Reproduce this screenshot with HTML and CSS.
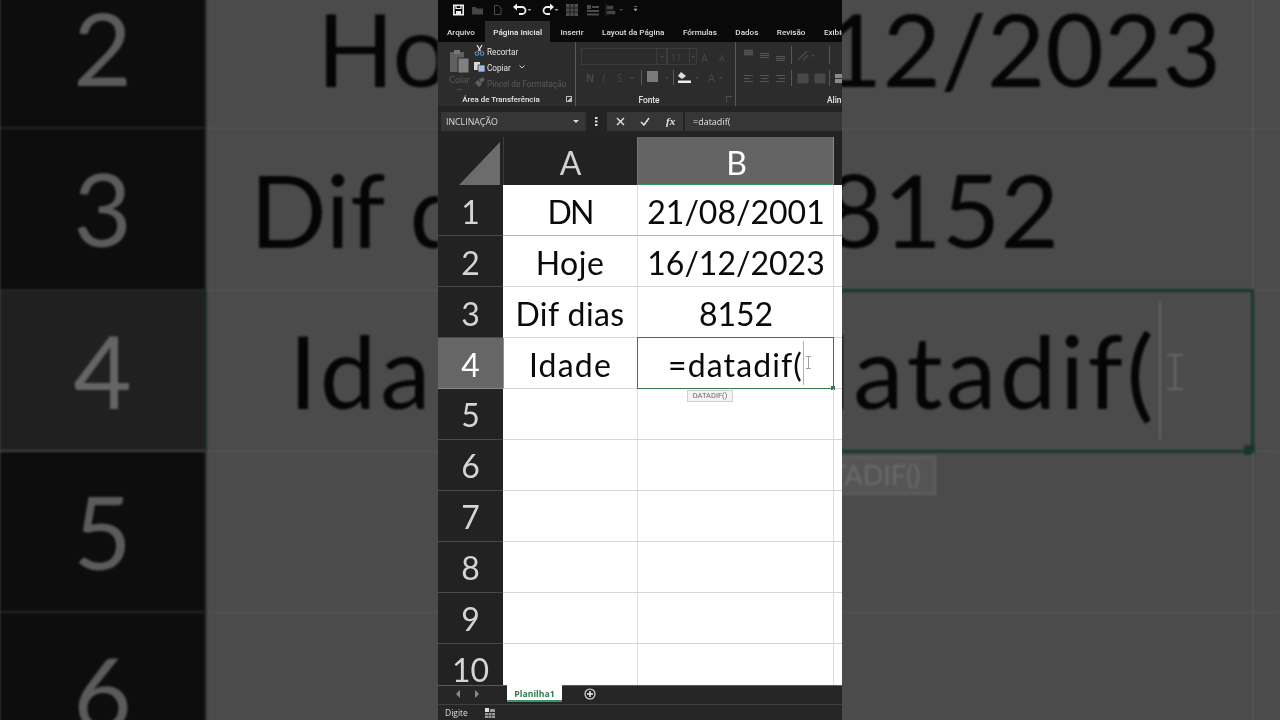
FILE: index.html
```html
<!DOCTYPE html>
<html lang="pt-BR">
<head>
<meta charset="utf-8">
<title>Excel - DATADIF</title>
<link rel="stylesheet" href="styles.css">
</head>
<body>
<div class="stage">
  <section class="side side-left">
    <div class="zoom-rows">
      <div class="zrow"><div class="zhead">2</div><div class="zcell zcell-l pad-hoje">Hoje</div></div>
      <div class="zrow"><div class="zhead">3</div><div class="zcell zcell-l pad-dif">Dif dias</div></div>
      <div class="zrow zrow-active"><div class="zhead">4</div><div class="zcell zcell-l pad-idade">Idade</div></div>
      <div class="zrow"><div class="zhead">5</div><div class="zcell zcell-l"></div></div>
      <div class="zrow"><div class="zhead">6</div><div class="zcell zcell-l"></div></div>
    </div>
  </section>

  <main class="app">
    <div class="qat">
      <svg class="qat-svg" width="200" height="21" viewBox="0 0 200 21">
        <g fill="none" stroke="#f0f0f0" stroke-width="1.6"><rect x="15.8" y="5.3" width="9.4" height="9.4"/><path d="M18 5.5v3h5v-3" stroke-width="1.2"/></g><rect x="18" y="11" width="5" height="3.5" fill="#f0f0f0"/>
        <path d="M34 7h4l1 1.5h6v6H34z" fill="#454545"/>
        <path d="M56.5 5.5h4l2.5 2.5v6.500h-6.500z" fill="none" stroke="#4c4c4c"/>
        <g fill="none" stroke="#f2f2f2" stroke-width="1.8"><path d="M78 7h6a3.500 3.500 0 0 1 0 7h-3"/></g><path d="M75 7l4-3.500v7z" fill="#f2f2f2"/>
        <path d="M89.500 9l2 2 2-2z" fill="#aaa"/>
        <g fill="none" stroke="#f2f2f2" stroke-width="1.800"><path d="M113 7h-4a3.500 3.500 0 0 0 0 7h3"/></g><path d="M116 7l-4-3.500v7z" fill="#f2f2f2"/>
        <path d="M116.500 9l2 2 2-2z" fill="#aaa"/>
        <g fill="#4c4c4c"><rect x="128" y="4" width="12" height="12"/></g><path d="M128 8h12M128 12h12M132 4v12M136 4v12" stroke="#1c1c1c"/>
        <path d="M149 5h4v4h-4zM154 6h7v2h-7zM149 10h12v2h-12zM149 13.500h12v2h-12z" fill="#4c4c4c"/>
        <path d="M168 4v12M169 6h6v3h-6zM169 11h8v3h-8z" fill="#444" stroke="#444" stroke-width=".6"/>
        <path d="M181 9l2 2 2-2z" fill="#444"/>
        <path d="M196 6.500h3M196 9l1.500 2 1.500-2z" fill="#aaa" stroke="#aaa" stroke-width=".6"/>
      </svg>
    </div>

    <nav class="tabs">
      <span class="tab">Arquivo</span>
      <span class="tab tab-active">Página Inicial</span>
      <span class="tab">Inserir</span>
      <span class="tab">Layout da Página</span>
      <span class="tab">Fórmulas</span>
      <span class="tab">Dados</span>
      <span class="tab">Revisão</span>
      <span class="tab">Exibir</span>
    </nav>

    <div class="ribbon">
      <div class="group group-clip">
        <div class="clip-body">
          <div class="paste">
            <svg width="22" height="26" viewBox="0 0 22 26"><path d="M1 4h14v20H1z" fill="#5f5f5f"/><path d="M5 2h6v4H5z" fill="#777"/><path d="M9 10h11v15H9z" fill="#808080" stroke="#2c2c2c"/></svg>
            <span class="paste-label">Colar</span>
            <span class="paste-caret"></span>
          </div>
          <div class="clip-actions">
            <div class="clip-row">
              <svg width="11" height="11" viewBox="0 0 11 11"><path d="M3 0l3.500 6M8 0L4.500 6" stroke="#e6e6e6" stroke-width="1.200" fill="none"/><circle cx="3" cy="8.500" r="1.800" fill="none" stroke="#5d93c9" stroke-width="1.100"/><circle cx="8" cy="8.500" r="1.800" fill="none" stroke="#5d93c9" stroke-width="1.100"/></svg>
              <span>Recortar</span>
            </div>
            <div class="clip-row">
              <svg width="11" height="11" viewBox="0 0 11 11"><path d="M0 1h6v8H0z" fill="#d8d8d8"/><path d="M4 4h7v7H4z" fill="#9fc0e4" stroke="#2c2c2c" stroke-width=".7"/></svg>
              <span>Copiar</span>
              <svg class="small-caret" width="6" height="4" viewBox="0 0 6 4"><path d="M.5.500l2.500 2.500L5.500.500" fill="none" stroke="#ccc"/></svg>
            </div>
            <div class="clip-row clip-row-off">
              <svg width="11" height="11" viewBox="0 0 11 11"><path d="M5 2l4-2 2 3-4 3zM1 6l3-3 4 4-3 3z" fill="#5e5e5e"/></svg>
              <span>Pincel de Formatação</span>
            </div>
          </div>
        </div>
        <div class="group-label">Área de Transferência<i class="launcher launcher-on"></i></div>
      </div>

      <div class="group group-font">
        <svg class="controls" width="158" height="50" viewBox="0 0 158 50">
          <g fill="none" stroke="#3c3c3c"><rect x="5.500" y="6.500" width="75" height="16"/><rect x="80.500" y="6.500" width="10" height="16"/><rect x="91.500" y="6.500" width="29" height="16"/><path d="M113.500 6.500v16"/></g>
          <g fill="#484848"><path d="M84 14l2 2 2-2zM115 14l2 2 2-2z"/><text x="95" y="19" font-size="9" class="ctl-text">11</text><text x="125" y="20" font-size="11" class="ctl-text">A</text><text x="143" y="20" font-size="9" class="ctl-text">A</text>
          <text x="10" y="40" font-size="10" font-weight="700" class="ctl-text">N</text><text x="26" y="40" font-size="10" font-style="italic" class="ctl-text">I</text><text x="41" y="40" font-size="10" class="ctl-text">S</text><path d="M54 35l2 2 2-2zM89 35l2 2 2-2zM119 35l2 2 2-2zM143 35l2 2 2-2z"/><text x="132" y="40" font-size="11" class="ctl-text">A</text></g>
          <path d="M65.500 28v15M97.500 28v15" stroke="#5a5a5a"/>
          <rect x="71" y="29" width="11" height="11" fill="#7a7a7a"/>
          <path d="M105 30l5 4-4 3-4-3z" fill="#e0e0e0"/><rect x="102" y="38.500" width="13" height="2.500" fill="#ececec"/>
        </svg>
        <div class="group-label">Fonte<i class="launcher"></i></div>
      </div>

      <div class="group group-align">
        <svg class="controls" width="106" height="50" viewBox="0 0 106 50">
          <g stroke="#565656" fill="none">
            <path d="M8 8.500h9M8 10.500h9M8 12.500h9" stroke-width="1.500"/>
            <path d="M24 11.500h9M24 13.500h9M24 15.500h9"/>
            <path d="M40 14.500h9M40 16.500h9M40 18.500h9"/>
            <path d="M8 33.500h9M8 36.500h6M8 39.500h9M24 33.500h9M25.500 36.500h6M24 39.500h9M40 33.500h9M43 36.500h6M40 39.500h9"/>
            <path d="M55.500 4v18M55.500 28v16M93.500 4v18M93.500 28v16" stroke="#585858"/>
            <path d="M62 18l9-9M67 18l5-5" stroke-width="1.500" stroke="#484848"/>
            <path d="M62 32h10v9H62zM79 32h10v9H79z" fill="#484848" stroke="#484848"/>
          </g>
          <path d="M75 13l2 2 2-2z" fill="#484848"/>
          <path d="M99 32h7v9h-7z" fill="#8a8a8a"/><path d="M99 36.500h7" stroke="#2c2c2c"/>
        </svg>
        <div class="group-label group-label-clip">Alinhamento</div>
      </div>
    </div>

    <div class="formula">
      <div class="namebox"><span>INCLINAÇÃO</span><i class="down-tri"></i></div>
      <svg class="dots" width="3" height="11" viewBox="0 0 3 11"><path d="M0 1h2.500v2H0zM0 4.500h2.500v2H0zM0 8h2.500v2H0z" fill="#dcdcdc"/></svg>
      <div class="fx-box">
        <svg width="9" height="9" viewBox="0 0 9 9"><path d="M1 1l7 7M8 1L1 8" stroke="#e4e4e4" stroke-width="1.400"/></svg>
        <svg width="10" height="9" viewBox="0 0 10 9"><path d="M1 5l3 3 5-7" fill="none" stroke="#e4e4e4" stroke-width="1.500"/></svg>
        <span class="fx">fx</span>
      </div>
      <div class="input">=datadif(</div>
    </div>

    <div class="sheet">
      <div class="corner"><svg width="42" height="44" viewBox="0 0 42 44"><path d="M0 44L41 1v43z" fill="#6c6c6c"/></svg></div>
      <div class="colhead">A</div>
      <div class="colhead colhead-on">B</div>
      <div class="colrest"></div>

      <div class="rowhead">1</div><div class="cell cell-first ls-dn">DN</div><div class="cell cell-b cell-first">21/08/2001</div><div class="cell-rest cell-first"></div>
      <div class="rowhead">2</div><div class="cell ls-hoje">Hoje</div><div class="cell cell-b">16/12/2023</div><div class="cell-rest"></div>
      <div class="rowhead">3</div><div class="cell ls-dif">Dif dias</div><div class="cell cell-b">8152</div><div class="cell-rest"></div>
      <div class="rowhead rowhead-on">4</div><div class="cell cell-a4 ls-idade">Idade</div>
      <div class="cell cell-sel"><span class="ls-formula">=datadif(</span><i class="caret"></i><svg class="ibeam" width="5" height="13" viewBox="0 0 5 13"><path d="M0 .5h5M0 12.500h5M2.500 .5v12" stroke="#a0a0a0" fill="none"/></svg><i class="handle"></i><span class="tip">DATADIF()</span></div><div class="cell-rest"></div>
      <div class="rowhead rowhead-low">5</div><div class="cell"></div><div class="cell cell-b"></div><div class="cell-rest"></div>
      <div class="rowhead rowhead-low">6</div><div class="cell"></div><div class="cell cell-b"></div><div class="cell-rest"></div>
      <div class="rowhead rowhead-low">7</div><div class="cell"></div><div class="cell cell-b"></div><div class="cell-rest"></div>
      <div class="rowhead rowhead-low">8</div><div class="cell"></div><div class="cell cell-b"></div><div class="cell-rest"></div>
      <div class="rowhead rowhead-low">9</div><div class="cell"></div><div class="cell cell-b"></div><div class="cell-rest"></div>
      <div class="rowhead rowhead-low">10</div><div class="cell"></div><div class="cell cell-b"></div><div class="cell-rest"></div>
    </div>

    <div class="sheetbar">
      <svg class="nav-arrows" width="24" height="8" viewBox="0 0 24 8"><path d="M4 0v8L0 4zM19 0v8l4-4z" fill="#8a8a8a"/></svg>
      <div class="sheet-tab">Planilha1</div>
      <svg class="add" width="12" height="12" viewBox="0 0 12 12"><circle cx="6" cy="6" r="5" fill="none" stroke="#eee" stroke-width="1.100"/><path d="M3 6h6M6 3v6" stroke="#eee" stroke-width="1.500"/></svg>
    </div>

    <footer class="status">
      <span>Digite</span>
      <svg width="10" height="10" viewBox="0 0 10 10"><path d="M0 0h4v4H0z" fill="#e0e0e0"/><path d="M0 5h10v5H0zM5 1h5v3H5z" fill="#9a9a9a"/><path d="M0 7.500h10M3.300 5v5M6.600 5v5" stroke="#262626" stroke-width=".6"/></svg>
    </footer>
  </main>

  <section class="side side-right">
    <div class="zoom-rows">
      <div class="zrow"><div class="zcell zcell-r pad-r1">16/12/2023</div><div class="zgap"></div></div>
      <div class="zrow"><div class="zcell zcell-r pad-r2">8152</div><div class="zgap"></div></div>
      <div class="zrow"><div class="zcell zcell-r zcell-sel pad-r3">=datadif(<i class="zcaret"></i><svg class="zibeam" width="16" height="36" viewBox="0 0 16 36"><path d="M0 1h16M0 35h16M8 1v34" stroke="#686868" stroke-width="2" fill="none"/></svg><i class="zhandle"></i></div><div class="zgap"></div></div>
      <div class="zrow"><div class="zcell zcell-r"><span class="ztip">DATADIF()</span></div><div class="zgap"></div></div>
      <div class="zrow"><div class="zcell zcell-r"></div><div class="zgap"></div></div>
    </div>
  </section>
</div>
</body>
</html>
```

FILE: styles.css
```css
* { box-sizing: border-box; }
html, body { margin: 0; height: 100%; overflow: hidden; background: #000; }
i { display: block; font-style: normal; }
svg { display: block; flex: none; }

.stage { display: flex; width: 1280px; height: 720px; font-family: "Lato", "Liberation Sans", sans-serif; }

/* blurred, dimmed side panels */
.side { width: 438px; height: 720px; overflow: hidden; flex: none; background: #4b4b4b; }
.zoom-rows { margin-top: -32px; filter: blur(.8px); }
.zrow { display: flex; height: 161.300px; }
.zhead { flex: none; width: 207px; background: #0d0d0d; border-bottom: 2px solid #262626; border-right: 2px solid #333; color: #5b5b5b; font-size: 101px; line-height: 159px; text-align: center; }
.zrow-active .zhead { background: #202020; border-bottom-color: #414141; border-right-color: #17301f; color: #656565; }
.zcell { position: relative; height: 161.300px; display: flex; align-items: center; white-space: nowrap; color: #050505; font-size: 101px; line-height: 159px; border-bottom: 1px solid #5a5a5a; overflow: visible; }
.zcell-l { flex: 1; min-width: 0; overflow: hidden; }
.zcell-r { flex: none; width: 412px; justify-content: flex-end; border-right: 2px solid #555; }
.zgap { flex: 1; height: 161.300px; border-bottom: 1px solid #5a5a5a; }
.pad-hoje { padding-left: 110px; }
.pad-dif { padding-left: 43px; }
.pad-idade { padding-left: 82px; letter-spacing: 4px; }
.pad-r1 { padding-right: 31px; }
.pad-r2 { padding-right: 193px; }
.pad-r3 { padding-right: 94px; letter-spacing: 3.500px; }
.zcell-sel { border: 3px solid #17372a; border-left: 0; height: 164.500px; margin-top: -2px; }
.zcaret { position: absolute; left: 317px; top: 10px; height: 138px; width: 2px; background: #636363; }
.zibeam { position: absolute; left: 325px; top: 62px; }
.zhandle { position: absolute; right: -4px; bottom: -5px; width: 11px; height: 10px; background: #17372a; }
.ztip { position: absolute; left: -130px; top: 4px; width: 224px; height: 39px; background: #555; border: 2px solid #606060; color: #6a6a6a; font-size: 27px; line-height: 34px; padding-left: 80px; letter-spacing: 0; overflow: hidden; }

/* app column */
.app { width: 404px; height: 720px; flex: none; display: flex; flex-direction: column; overflow: hidden; background: #232323; }
.qat { height: 21px; flex: none; background: #090909; filter: blur(.25px); }
.tabs { height: 21px; flex: none; background: #090909; display: flex; gap: 18.500px; padding-left: 9px; white-space: nowrap; overflow: hidden; color: #dedede; font-family: "Roboto", sans-serif; font-size: 8.100px; font-weight: 500; line-height: 22px; filter: blur(.25px); }
.tab { flex: none; }
.tab-active { background: #2d2d2d; margin: 0 -8px; padding: 0 8px; color: #eee; }

.ribbon { height: 64px; flex: none; background: #2c2c2c; display: flex; filter: blur(.3px); overflow: hidden; }
.group { flex: none; display: flex; flex-direction: column; height: 64px; border-right: 1px solid #5a5a5a; }
.group-clip { width: 138px; }
.group-font { width: 160px; }
.group-align { flex: 1; width: auto; border-right: 0; }
.clip-body { height: 51px; display: flex; }
.paste { width: 36px; padding: 6px 0 0 11px; display: flex; flex-direction: column; }
.paste-label { font-size: 9px; line-height: 12px; color: #565656; }
.paste-caret { width: 5px; height: 1px; background: #4c4c4c; margin: 3px 0 0 8px; }
.clip-actions { padding-top: 3px; display: flex; flex-direction: column; gap: 5px; }
.clip-row { height: 11px; display: flex; align-items: center; gap: 2px; font-family: "Roboto", sans-serif; font-size: 8.200px; color: #e4e4e4; white-space: nowrap; }
.clip-row span { position: relative; top: 1px; }
.clip-row-off { color: #5a5a5a; }
.small-caret { margin-left: 6px; }
.group-label { position: relative; height: 13px; text-align: center; font-family: "Roboto", sans-serif; font-size: 7.900px; font-weight: 500; line-height: 14px; color: #e6e6e6; white-space: nowrap; padding-right: 11px; }
.controls { margin-bottom: 1px; }
.group-font .group-label { padding-right: 13px; font-size: 8.400px; }
.group-label-clip { padding: 0 0 0 91px; text-align: left; font-size: 8.400px; }
.launcher { position: absolute; right: 3px; top: 3px; width: 6px; height: 6px; border: 1px solid #4e4e4e; border-width: 1px 0 0 1px; }
.launcher-on { border-color: #bbb; background: linear-gradient(135deg, transparent 50%, #bbb 50%); }
.ctl-text { font-family: "Open Sans", sans-serif; }

/* formula bar */
.formula { height: 31px; flex: none; background: #232323; display: flex; align-items: flex-start; padding: 6px 0 0 3px; filter: blur(.25px); }
.namebox { width: 145px; height: 19px; background: #363636; display: flex; align-items: center; justify-content: space-between; padding: 0 7px 0 5px; color: #dcdcdc; font-family: "Open Sans", sans-serif; font-size: 8.800px; }
.down-tri { width: 0; height: 0; border: 3px solid transparent; border-top: 3px solid #ddd; border-bottom: 0; }
.dots { margin: 4px 9px 0 9px; }
.fx-box { width: 76px; height: 19px; background: #363636; display: flex; align-items: center; gap: 15px; padding-left: 9px; }
.fx { color: #e6e6e6; font-family: "Liberation Serif", serif; font-style: italic; font-weight: 700; font-size: 11px; line-height: 19px; margin-left: 1px; }
.input { flex: 1; height: 19px; margin-left: 2px; background: #363636; color: #e0e0e0; font-family: "Open Sans", sans-serif; font-size: 9px; line-height: 20px; padding-left: 8px; }

/* sheet */
.sheet { height: 548px; flex: none; overflow: hidden; display: grid; grid-template-columns: 65px 134px 197px 8px; grid-template-rows: 48px; grid-auto-rows: 51px; background: #fff; font-size: 32px; filter: blur(.25px); }
.corner { background: #222; padding: 4px 0 0 21px; }
.colhead { background: #222; color: #d2d2d2; text-align: center; line-height: 51px; border-left: 1px solid #3c3c3c; }
.colhead-on { background: #646464; color: #fff; border-left: 1px solid #777; border-right: 1px solid #888; border-bottom: 1px solid #3e9366; padding-left: 2px; }
.colrest { background: #222; }
.rowhead { background: #222; color: #d4d4d4; text-align: center; line-height: 54px; border-bottom: 1px solid #484848; }
.rowhead-low { line-height: 52px; }
.rowhead-on { background: #666; color: #fff; border-bottom-color: #888; }
.cell { position: relative; color: #0a0a0a; text-align: center; line-height: 54px; white-space: nowrap; border-bottom: 1px solid #d6d6d6; }
.cell-b { border-left: 1px solid #dcdcdc; border-right: 1px solid #dcdcdc; padding-left: 1px; }
.cell-rest { border-bottom: 1px solid #d6d6d6; }
.cell-first { border-bottom-color: #b4b4b4; }
.ls-dn { letter-spacing: -2px; }
.ls-hoje { letter-spacing: .5px; }
.ls-dif { letter-spacing: .4px; }
.ls-idade { letter-spacing: 1.200px; }
.ls-formula { letter-spacing: 1.100px; }
.cell-a4 { border-left: 1px solid #6f9f84; }
.cell-sel { border: 1.500px solid #35794f; margin-top: -1px; height: 52px; line-height: 53px; overflow: visible; }
.caret { position: absolute; left: 165px; top: 3px; height: 44px; width: 1px; background: #b4b4b4; }
.ibeam { position: absolute; left: 168px; top: 18px; }
.handle { position: absolute; right: -2px; bottom: -2px; width: 4px; height: 4px; background: #35794f; }
.tip { position: absolute; left: 49px; top: 52px; width: 46px; height: 12px; background: #f4f4f4; border: 1px solid #d0d0d0; color: #666; font-size: 7.500px; line-height: 10px; letter-spacing: 0; text-align: center; z-index: 2; font-family: "Roboto", sans-serif; }

.sheetbar { height: 20px; flex: none; background: #262626; border-top: 1px solid #5a5a5a; border-bottom: 1px solid #3e3e3e; display: flex; align-items: flex-start; filter: blur(.2px); }
.nav-arrows { margin: 4px 0 0 18px; }
.sheet-tab { width: 55px; height: 17px; margin-left: 27px; margin-top: -1px; background: #fff; border-bottom: 2px solid #3e9366; color: #2f7a4d; font-family: "Open Sans", sans-serif; font-size: 8.700px; font-weight: 700; line-height: 18px; text-align: center; }
.add { margin: 2px 0 0 22px; }
.status { height: 15px; flex: none; background: #262626; display: flex; align-items: center; gap: 17px; padding-left: 7px; color: #dedede; font-family: "Open Sans", sans-serif; font-size: 8.500px; filter: blur(.2px); }
```
